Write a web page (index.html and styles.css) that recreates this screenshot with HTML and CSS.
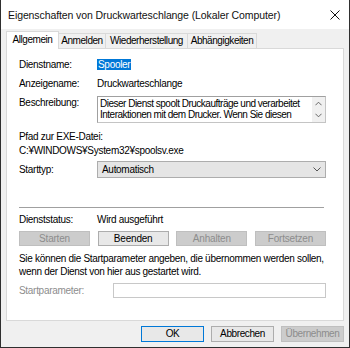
FILE: index.html
```html
<!DOCTYPE html>
<html lang="de">
  <head>
    <meta charset="UTF-8" />
    <title>Eigenschaften von Druckwarteschlange</title>
    <link rel="stylesheet" href="styles.css">
  </head>
  <body>
    <div class="window">
      <div class="titlebar">
        <span class="titlebar__text">Eigenschaften von Druckwarteschlange (Lokaler Computer)</span>
        <svg class="titlebar__close" viewBox="0 0 10 10">
          <path d="M0.5 0.5L9.5 9.5M9.5 0.5L0.5 9.5" stroke="#111" stroke-width="1" fill="none" />
        </svg>
      </div>
      <div class="client">
        <div class="tabs">
          <div class="tab tab--active tab--general">Allgemein</div>
          <div class="tab tab--logon">Anmelden</div>
          <div class="tab tab--recovery">Wiederherstellung</div>
          <div class="tab tab--deps">Abhängigkeiten</div>
        </div>
        <div class="panel">
          <div class="row row--name">
            <span class="label">Dienstname:</span>
            <span class="value"><span class="selected">Spooler</span></span>
          </div>
          <div class="row row--display">
            <span class="label">Anzeigename:</span>
            <span class="value">Druckwarteschlange</span>
          </div>
          <div class="row row--desc">
            <span class="label">Beschreibung:</span>
            <div class="textbox">
              <div class="textbox__text">Dieser Dienst spoolt Druckaufträge und verarbeitet<br>Interaktionen mit dem Drucker. Wenn Sie diesen</div>
              <div class="textbox__scroll">
                <svg viewBox="0 0 8 5"><path d="M0.5 4.5L4 1L7.5 4.5" stroke="#555" fill="none" /></svg>
                <svg viewBox="0 0 8 5"><path d="M0.5 0.5L4 4L7.5 0.5" stroke="#555" fill="none" /></svg>
              </div>
            </div>
          </div>
          <div class="path">
            <div>Pfad zur EXE-Datei:</div>
            <div>C:¥WINDOWS¥System32¥spoolsv.exe</div>
          </div>
          <div class="row row--start">
            <span class="label">Starttyp:</span>
            <div class="select">
              <span>Automatisch</span>
              <svg viewBox="0 0 8 5"><path d="M0.5 0.5L4 4L7.5 0.5" stroke="#555" fill="none" /></svg>
            </div>
          </div>
          <div class="separator"></div>
          <div class="row row--status">
            <span class="label">Dienststatus:</span>
            <span class="value">Wird ausgeführt</span>
          </div>
          <div class="actions">
            <button class="btn btn--disabled">Starten</button>
            <button class="btn">Beenden</button>
            <button class="btn btn--disabled">Anhalten</button>
            <button class="btn btn--disabled">Fortsetzen</button>
          </div>
          <p class="hint">Sie können die Startparameter angeben, die übernommen werden sollen,<br>wenn der Dienst von hier aus gestartet wird.</p>
          <div class="row row--param">
            <span class="label label--disabled">Startparameter:</span>
            <div class="input"></div>
          </div>
        </div>
        <div class="footer">
          <button class="btn btn--footer btn--default">OK</button>
          <button class="btn btn--footer">Abbrechen</button>
          <button class="btn btn--footer btn--disabled">Übernehmen</button>
        </div>
      </div>
    </div>
  </body>
</html>
```

FILE: styles.css
```css
body {
  margin: 0;
  width: 350px;
  height: 348px;
  overflow: hidden;
  background: #fff;
  font-family: "Liberation Sans", Arial, "Noto Sans CJK JP", sans-serif;
  font-size: 10px;
  letter-spacing: -0.3px;
  color: #000;
}

.window {
  box-sizing: border-box;
  width: 350px;
  height: 348px;
  border: 1px solid #2f2f2f;
  border-top: none;
  display: flex;
  flex-direction: column;
  background: #f0f0f0;
}

.titlebar {
  height: 29px;
  flex: none;
  background: #fff;
  display: flex;
  align-items: center;
  justify-content: space-between;
  padding: 0 9px 0 7px;
}
.titlebar__text {
  font-family: "Liberation Sans", Arial, sans-serif;
  font-size: 10.5px;
  letter-spacing: -0.1px;
  color: #111;
  white-space: nowrap;
}
.titlebar__close {
  width: 10px;
  height: 10px;
}

.client {
  flex: 1;
  display: flex;
  flex-direction: column;
  padding: 0 5px 0 5px;
}

.tabs {
  display: flex;
  align-items: flex-end;
  height: 17px;
  margin-top: 2px;
  padding-left: 1px;
  position: relative;
  z-index: 1;
}
.tab {
  box-sizing: border-box;
  height: 15px;
  line-height: 13px;
  text-align: center;
  border: 1px solid #d9d9d9;
  border-bottom: none;
  margin-left: -1px;
  background: #f0f0f0;
  white-space: nowrap;
  letter-spacing: -0.45px;
}
.tab--active {
  height: 18px;
  line-height: 15px;
  margin-bottom: -1px;
  background: #fff;
}
.tab--general { width: 53px; }
.tab--logon { width: 48px; }
.tab--recovery { width: 83px; }
.tab--deps { width: 70px; }

.panel {
  box-sizing: border-box;
  height: 273px;
  background: #fff;
  border: 1px solid #d9d9d9;
  padding: 8px 17px 0 12px;
  display: flex;
  flex-direction: column;
}

.row {
  display: flex;
  align-items: center;
}
.label {
  width: 78px;
  flex: none;
}
.label--disabled {
  color: #8d8d8d;
  width: 94px;
}
.selected {
  background: #0078d7;
  color: #fff;
  padding: 0 1px;
}

.row--name { height: 14px; }
.row--display { height: 14px; margin-top: 5px; }
.row--desc {
  margin-top: 6px;
  align-items: flex-start;
}
.row--desc .label { margin-top: 1px; }

.textbox {
  box-sizing: border-box;
  flex: 1;
  height: 27px;
  display: flex;
  border: 1px solid #c4c4c4;
  border-top-color: #a0a0a0;
  border-left-color: #a0a0a0;
}
.textbox__text {
  flex: 1;
  padding: 1px 0 0 2px;
  line-height: 11px;
  letter-spacing: -0.5px;
  white-space: nowrap;
  overflow: hidden;
}
.textbox__scroll {
  width: 13px;
  background: #f0f0f0;
  display: flex;
  flex-direction: column;
  align-items: center;
  justify-content: space-around;
}
.textbox__scroll svg {
  width: 7px;
  height: 5px;
}

.path {
  margin-top: 7px;
  line-height: 14px;
}

.row--start {
  margin-top: 3px;
}
.select {
  box-sizing: border-box;
  flex: 1;
  height: 17px;
  display: flex;
  align-items: center;
  justify-content: space-between;
  padding: 0 4px 0 4px;
  background: #e5e5e5;
  border: 1px solid #adadad;
}
.select svg {
  width: 8px;
  height: 5px;
}

.separator {
  height: 1px;
  background: #a0a0a0;
  margin-top: 29px;
  margin-right: 2px;
}

.row--status {
  height: 14px;
  margin-top: 4px;
}

.actions {
  display: flex;
  justify-content: space-between;
  margin-top: 5px;
}

.btn {
  box-sizing: border-box;
  width: 71px;
  height: 15px;
  padding: 0;
  border: 1px solid #adadad;
  background: #e8e8e8;
  font-family: inherit;
  font-size: 10px;
  letter-spacing: -0.2px;
  color: #000;
  line-height: 12px;
}
.btn--disabled {
  background: #cccccc;
  border-color: #bfbfbf;
  color: #8d8d8d;
}

.hint {
  margin: 6px 0 0;
  line-height: 13px;
  white-space: nowrap;
}

.row--param {
  margin-top: 5px;
}
.input {
  box-sizing: border-box;
  flex: 1;
  height: 15px;
  border: 1px solid #c8c8c8;
}

.footer {
  display: flex;
  justify-content: flex-end;
  gap: 7px;
  margin-top: 5px;
}
.btn--footer {
  width: 63px;
  height: 16px;
  letter-spacing: -0.4px;
}
.btn--default {
  border-color: #0078d7;
}
```
